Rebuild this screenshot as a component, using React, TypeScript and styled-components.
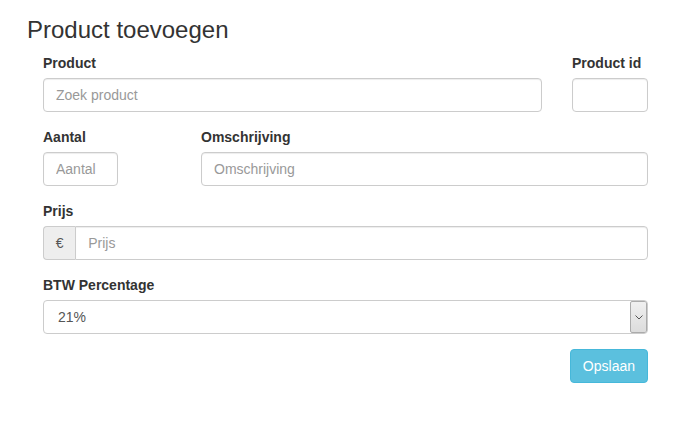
import React from 'react'
import styled, { createGlobalStyle } from 'styled-components';

const GlobalStyle = createGlobalStyle`
    body {
        margin: 0;
        background: #FFFFFF;
        font-family: "Liberation Sans", Arial, sans-serif;
        font-size: 14px;
        line-height: 20px;
        color: #333333;
    }
    * {
        box-sizing: border-box;
    }
`;

const Page = styled.div`
    padding: 17px 0 0 27px;
    width: 694px;
    height: 427px;
`;

const Title = styled.h3`
    margin: 0 0 10px 0;
    font-size: 24px;
    font-weight: 500;
    line-height: 26.4px;
    color: #333333;
`;

const Form = styled.form`
    margin-left: 16px;
    width: 605px;
`;

const Row = styled.div<{ $columns: string; $gap: number }>`
    display: grid;
    grid-template-columns: ${p => p.$columns};
    column-gap: ${p => p.$gap}px;
`;

const Group = styled.div`
    display: flex;
    flex-direction: column;
    margin-bottom: 15px;
`;

const Label = styled.label`
    display: block;
    margin-bottom: 5px;
    font-weight: bold;
    font-size: 14px;
    line-height: 20px;
`;

const Input = styled.input<{ $joined?: boolean }>`
    display: block;
    width: 100%;
    height: 34px;
    padding: 6px 12px;
    font-family: inherit;
    font-size: 14px;
    line-height: 20px;
    color: #555555;
    background: #FFFFFF;
    border: 1px solid #CCCCCC;
    border-radius: ${p => (p.$joined ? '0 4px 4px 0' : '4px')};
    box-shadow: inset 0 1px 1px rgba(0, 0, 0, 0.075);
    outline: none;

    &::placeholder {
        color: #999999;
    }
`;

const InputGroup = styled.div`
    display: flex;
`;

const Addon = styled.span`
    display: flex;
    align-items: center;
    justify-content: center;
    width: 34px;
    height: 34px;
    font-size: 14px;
    color: #555555;
    background: #EEEEEE;
    border: 1px solid #CCCCCC;
    border-right: none;
    border-radius: 4px 0 0 4px;
`;

const SelectBox = styled.div`
    display: flex;
    height: 34px;
    border: 1px solid #CCCCCC;
    border-radius: 4px;
    background: #FFFFFF;
    overflow: hidden;
`;

const Select = styled.select`
    flex: 1;
    border: none;
    padding: 6px 14px;
    font-family: inherit;
    font-size: 14px;
    color: #555555;
    background: transparent;
    appearance: none;
    outline: none;
`;

const ArrowBox = styled.span`
    display: flex;
    align-items: center;
    justify-content: center;
    width: 17px;
    border: 1px solid #ABABAB;
    border-radius: 2px;
    background: linear-gradient(#F0F0F0, #DCDCDC);
`;

const Actions = styled.div`
    display: flex;
    justify-content: flex-end;
`;

const Button = styled.button`
    height: 34px;
    padding: 6px 12px;
    font-family: inherit;
    font-size: 14px;
    line-height: 20px;
    color: #FFFFFF;
    background-color: #5BC0DE;
    border: 1px solid #46B8DA;
    border-radius: 4px;
    cursor: pointer;
`;

const App: React.FC = () => {

    return (
        <Page>
            <GlobalStyle />
            <Title>Product toevoegen</Title>
            <Form onSubmit={e => e.preventDefault()}>
                <Row $columns="1fr 76px" $gap={30}>
                    <Group>
                        <Label>Product</Label>
                        <Input placeholder="Zoek product" />
                    </Group>
                    <Group>
                        <Label>Product id</Label>
                        <Input />
                    </Group>
                </Row>
                <Row $columns="75px 1fr" $gap={83}>
                    <Group>
                        <Label>Aantal</Label>
                        <Input placeholder="Aantal" />
                    </Group>
                    <Group>
                        <Label>Omschrijving</Label>
                        <Input placeholder="Omschrijving" />
                    </Group>
                </Row>
                <Group>
                    <Label>Prijs</Label>
                    <InputGroup>
                        <Addon>€</Addon>
                        <Input $joined placeholder="Prijs" />
                    </InputGroup>
                </Group>
                <Group>
                    <Label>BTW Percentage</Label>
                    <SelectBox>
                        <Select defaultValue="21">
                            <option value="21">21%</option>
                            <option value="9">9%</option>
                            <option value="0">0%</option>
                        </Select>
                        <ArrowBox>
                            <svg width="8" height="5" viewBox="0 0 8 5">
                                <path d="M0.5 0.5 L4 4 L7.5 0.5" fill="none" stroke="#555555" strokeWidth="1" />
                            </svg>
                        </ArrowBox>
                    </SelectBox>
                </Group>
                <Actions>
                    <Button type="submit">Opslaan</Button>
                </Actions>
            </Form>
        </Page>
    )
}

export default App;
